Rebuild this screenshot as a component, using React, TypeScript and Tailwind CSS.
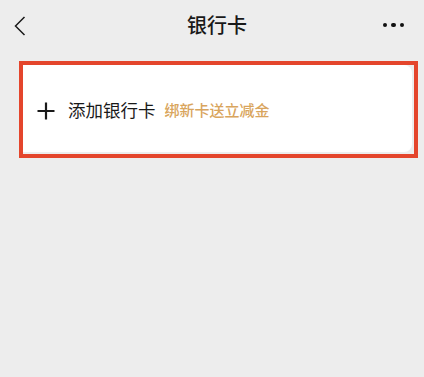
import React from "react";

export default function App() {
  return (
    <div
      className="w-[424px] h-[377px] bg-[#ededed] overflow-hidden"
      style={{ fontFamily: '"Noto Sans CJK SC", "Noto Sans", sans-serif' }}
    >
      <div className="relative h-[50px] flex items-center justify-between px-[14px]">
        <svg width="12" height="20" viewBox="0 0 12 20" className="ml-[0px] mt-[2px]">
          <path d="M10.5 1 L1.5 10 L10.5 19" fill="none" stroke="#1a1a1a" strokeWidth="1.5" />
        </svg>
        <div className="absolute left-0 right-0 top-0 h-[50px] flex items-center justify-center pointer-events-none">
          <span className="text-[20px] font-medium text-[#191919] ml-[10px]">银行卡</span>
        </div>
        <div className="flex items-center gap-[4px] mr-[6px]">
          <span className="w-[4.5px] h-[4.5px] rounded-full bg-[#111]" />
          <span className="w-[4.5px] h-[4.5px] rounded-full bg-[#111]" />
          <span className="w-[4.5px] h-[4.5px] rounded-full bg-[#111]" />
        </div>
      </div>
      <div className="pl-[19px] pt-[11px]">
        <div className="w-[399px] h-[97px] border-4 border-[#e4452c] pr-[2px] pb-[2px] flex">
          <div className="flex-1 bg-white rounded-r-[8px] flex items-center pl-[14px] pt-[4px]">
            <svg width="18" height="18" viewBox="0 0 18 18">
              <path d="M9 0.5 V17.5 M0.5 9 H17.5" stroke="#1a1a1a" strokeWidth="2.2" />
            </svg>
            <span className="ml-[13px] text-[17.5px] text-[#191919]">添加银行卡</span>
            <span className="ml-[9px] text-[15px] font-medium text-[#d9a55d]">绑新卡送立减金</span>
          </div>
        </div>
      </div>
    </div>
  );
}
